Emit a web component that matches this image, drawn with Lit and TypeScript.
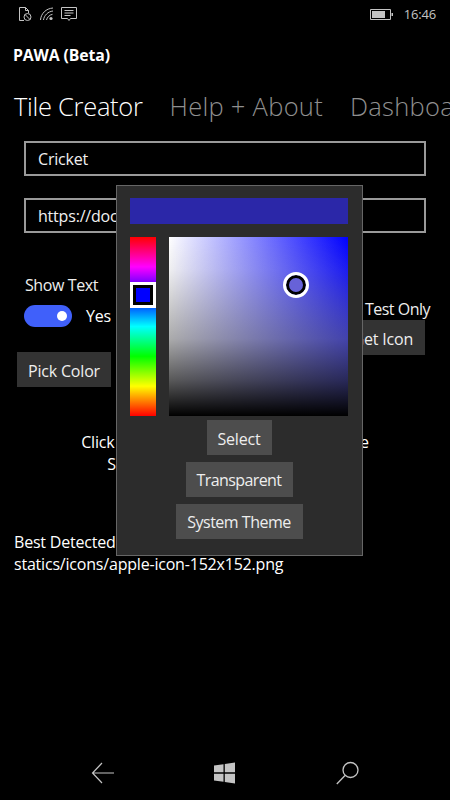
import { LitElement, html, css } from "lit";
import { customElement } from "lit/decorators.js";

@customElement("app-root")
export class AppRoot extends LitElement {
  static styles = css`
    :host { display: block; width: 450px; height: 800px; background: #000; color: #fff; font-family: "Open Sans", "Noto Sans", sans-serif; overflow: hidden; }
    .page { position: relative; display: flex; flex-direction: column; height: 800px; overflow: hidden; }
    .status { display: flex; align-items: center; height: 28px; flex: none; padding: 0 14px 0 17px; color: #c4c4c4; }
    .status svg { display: block; }
    .left { display: flex; gap: 6px; align-items: center; }
    .right { margin-left: auto; display: flex; align-items: center; gap: 11px; font-size: 13px; letter-spacing: -0.2px; }
    .title { font-size: 15.8px; font-weight: 700; letter-spacing: -0.1px; margin: 17px 0 0 13px; line-height: 21px; }
    .tabs { display: flex; gap: 27px; margin: 23px 0 0 14px; font-size: 25.5px; font-weight: 300; line-height: 34px; white-space: nowrap; letter-spacing: 0.27px; color: #8f8f8f; }
    .tabs .on { color: #fff; letter-spacing: -0.3px; }
    .field { margin: 0 24px; height: 35px; box-sizing: border-box; border: 2px solid #9a9a9a; padding: 1px 12px 0; font-size: 16px; line-height: 31px; letter-spacing: -0.2px; white-space: nowrap; overflow: hidden; color: #f0f0f0; }
    .f1 { margin-top: 18px; }
    .f2 { margin-top: 22px; }
    .row { display: flex; justify-content: space-between; margin: 40px 25px 0 24px; height: 80px; }
    .label { font-size: 16px; letter-spacing: -0.4px; line-height: 22px; color: #eee; padding-top: 1px; }
    .showtext { margin-left: 1px; }
    .toggle-row { display: flex; align-items: center; gap: 14px; margin-top: 9px; font-size: 16px; letter-spacing: -0.2px; }
    .toggle { position: relative; width: 48px; height: 22px; border-radius: 11px; background: #4060fa; }
    .toggle::after { content: ""; position: absolute; right: 5px; top: 6px; width: 10px; height: 10px; border-radius: 50%; background: #fff; }
    .rcol { display: flex; flex-direction: column; align-items: flex-end; margin-top: 25px; }
    .btn { background: #333; color: #eee; font-size: 16px; letter-spacing: -0.2px; height: 35px; line-height: 38px; padding: 0 12px; white-space: nowrap; box-sizing: border-box; }
    .testonly { line-height: 20px; margin-right: -5px; letter-spacing: -0.5px; }
    .getbtn { margin-top: 1px; }
    .pick { align-self: flex-start; margin: -1px 0 0 17px; width: 94px; text-align: center; padding: 0; }
    .hint { margin: 44px 0 0; text-align: center; font-size: 16px; letter-spacing: -0.2px; line-height: 22px; white-space: nowrap; }
    .best { margin: 56px 14px 0; font-size: 16px; letter-spacing: -0.2px; line-height: 22px; white-space: nowrap; }
    .nav { margin-top: auto; flex: none; height: 54px; display: grid; grid-template-columns: 1fr 1fr 1fr; align-items: center; justify-items: center; color: #c4c4c4; box-sizing: border-box; }
    .nav .a { margin-left: 56px; }
    .nav .c { margin-right: 54px; }
    .fly { position: absolute; left: 116px; top: 185px; width: 247px; height: 371px; box-sizing: border-box; background: #2c2c2c; border: 1px solid #666; padding: 12px 14px 0 13px; display: flex; flex-direction: column; align-items: center; }
    .preview { width: 218px; height: 26px; background: #2b27a8; flex: none; }
    .pickers { display: flex; justify-content: space-between; width: 218px; margin-top: 13px; height: 179px; flex: none; }
    .hue { position: relative; width: 26px; height: 100%; background: linear-gradient(to bottom, #f00 0%, #f0f 16.67%, #00f 33.33%, #0ff 50%, #0f0 66.67%, #ff0 83.33%, #f00 100%); }
    .thumb { position: absolute; left: 0; top: 45px; width: 26px; height: 26px; box-sizing: border-box; border: 3px solid #fff; background: #00f; outline: 3px solid #000; outline-offset: -6px; }
    .sv { position: relative; width: 179px; height: 100%; background:
      linear-gradient(to bottom, rgba(0,0,0,0) 0%, rgba(0,0,0,.06) 18%, rgba(0,0,0,.33) 57%, rgba(0,0,0,.65) 80%, #000 100%),
      linear-gradient(to bottom, rgba(255,255,255,0) 0%, rgba(255,255,255,.15) 24%, rgba(255,255,255,.39) 57%, rgba(255,255,255,.45) 80%, rgba(255,255,255,.5) 100%),
      linear-gradient(to right, #fff, #00f); }
    .dot { position: absolute; left: 114px; top: 35px; width: 26px; height: 26px; box-sizing: border-box; border-radius: 50%; border: 3px solid #fff; background: #6762d8; box-shadow: inset 0 0 0 3px #000; }
    .fbtn { background: #4d4d4d; color: #eee; font-size: 16px; letter-spacing: -0.2px; height: 35px; line-height: 38px; text-align: center; box-sizing: border-box; flex: none; white-space: nowrap; }
    .b1 { width: 65px; margin-top: 4px; }
    .b2 { width: 107px; margin-top: 7px; letter-spacing: -0.6px; line-height: 37px; }
    .b3 { width: 127px; margin-top: 7px; letter-spacing: -0.5px; line-height: 37px; }
  `;

  render() {
    return html`<div class="page">
      <div class="status">
        <div class="left">
          <svg width="16" height="16" viewBox="0 0 16 16" fill="none" stroke="currentColor" stroke-width="1"><path d="M7 14.5H2.5V1.5H8.5L11.5 4.5V7M8.5 1.5V4.5H11.5"/><circle cx="10.5" cy="11" r="3.5"/><path d="M8 8.5L13 13.5"/></svg>
          <svg width="16" height="16" viewBox="0 0 16 16" fill="none" stroke="currentColor" stroke-width="1"><path d="M1.5 14C2 7.5 7 2.5 14 2M4.5 14C5 9.5 9 5.5 14 5M7.5 14C8 11.5 10.5 8.8 13.5 8.3"/><circle cx="12" cy="12.5" r="1.6" fill="currentColor" stroke="none"/></svg>
          <svg width="16" height="17" viewBox="0 0 16 17" fill="none" stroke="currentColor" stroke-width="1"><path d="M.5 1.5H15.5V12.5H9.5L8 14.5L6.5 12.5H.5Z"/><path d="M3.5 4.5H12.5M3.5 7H12.5M3.5 9.5H9.5"/></svg>
        </div>
        <div class="right">
          <svg width="23" height="11" viewBox="0 0 23 11"><path d="M.5.5H20.5V10.5H.5Z" fill="none" stroke="currentColor"/><rect x="2" y="2" width="13" height="7" fill="currentColor"/><rect x="21.5" y="4" width="1.5" height="3" fill="currentColor"/></svg>
          <span>16:46</span>
        </div>
      </div>
      <div class="title">PAWA (Beta)</div>
      <div class="tabs"><span class="on">Tile Creator</span><span>Help + About</span><span>Dashboard</span></div>
      <div class="field f1">Cricket</div>
      <div class="field f2">https://docs.example.com/cricket</div>
      <div class="row">
        <div>
          <div class="label showtext">Show Text</div>
          <div class="toggle-row"><div class="toggle"></div><span>Yes</span></div>
        </div>
        <div class="rcol">
          <div class="label testonly">Test Only</div>
          <div class="btn getbtn">Get Icon</div>
        </div>
      </div>
      <div class="btn pick">Pick Color</div>
      <div class="hint">Click Get Icon to find an icon for the site<br>Save it as a tile once you're done</div>
      <div class="best">Best Detected Icon:<br>statics/icons/apple-icon-152x152.png</div>
      <div class="nav">
        <svg class="a" width="24" height="22" viewBox="0 0 24 22" fill="none" stroke="currentColor" stroke-width="1.2"><path d="M23 11H2M11 1L1.5 11L11 21"/></svg>
        <svg width="22" height="22" viewBox="0 0 22 22" fill="currentColor"><path d="M0 3.5L9.5 2.2V10.3H0ZM10.8 2L21 .5V10.3H10.8ZM0 11.7H9.5V19.8L0 18.5ZM10.8 11.7H21V21.5L10.8 20Z"/></svg>
        <svg class="c" width="24" height="24" viewBox="0 0 24 24" fill="none" stroke="currentColor" stroke-width="1.3"><circle cx="14.5" cy="9" r="7.5"/><path d="M9 14.5L.8 23"/></svg>
      </div>
      <div class="fly">
        <div class="preview"></div>
        <div class="pickers">
          <div class="hue"><div class="thumb"></div></div>
          <div class="sv"><div class="dot"></div></div>
        </div>
        <div class="fbtn b1">Select</div>
        <div class="fbtn b2">Transparent</div>
        <div class="fbtn b3">System Theme</div>
      </div>
    </div>`;
  }
}
